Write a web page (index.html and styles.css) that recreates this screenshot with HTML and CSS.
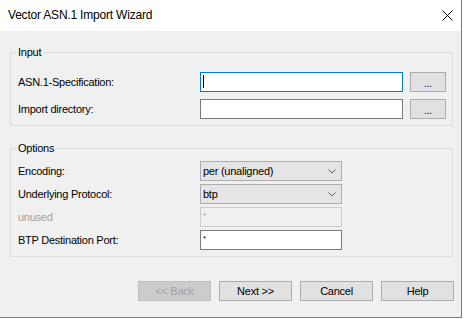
FILE: index.html
```html
<!DOCTYPE html>
<html lang="en">
<head>
    <meta charset="UTF-8" />
    <title>Vector ASN.1 Import Wizard</title>
    <link rel="stylesheet" href="styles.css">
</head>
<body>
    <div class="window">
        <div class="titlebar">
            <span class="title">Vector ASN.1 Import Wizard</span>
            <svg class="close" width="11" height="11" viewBox="0 0 11 11">
                <path d="M0.5 0.5 L10.5 10.5 M10.5 0.5 L0.5 10.5" stroke="#000" stroke-width="1" fill="none" />
            </svg>
        </div>

        <div class="content">
            <!-- Input group -->
            <fieldset class="group group-input">
                <legend>Input</legend>
                <div class="rows">
                    <div class="row">
                        <span class="label">ASN.1-Specification:</span>
                        <div class="textbox wide focused"><span class="caret"></span></div>
                        <div class="btn small">...</div>
                    </div>
                    <div class="row">
                        <span class="label">Import directory:</span>
                        <div class="textbox wide"></div>
                        <div class="btn small">...</div>
                    </div>
                </div>
            </fieldset>

            <!-- Options group -->
            <fieldset class="group group-options">
                <legend>Options</legend>
                <div class="rows">
                    <div class="row">
                        <span class="label">Encoding:</span>
                        <div class="combo">
                            <span>per (unaligned)</span>
                            <svg width="8" height="5" viewBox="0 0 8 5"><path d="M0.5 0.5 L4 4 L7.5 0.5" stroke="#606060" fill="none" /></svg>
                        </div>
                    </div>
                    <div class="row row-gap2">
                        <span class="label">Underlying Protocol:</span>
                        <div class="combo">
                            <span>btp</span>
                            <svg width="8" height="5" viewBox="0 0 8 5"><path d="M0.5 0.5 L4 4 L7.5 0.5" stroke="#606060" fill="none" /></svg>
                        </div>
                    </div>
                    <div class="row row-gap3">
                        <span class="label disabled">unused</span>
                        <div class="textbox narrow disabled"><span class="star">*</span></div>
                    </div>
                    <div class="row row-gap4">
                        <span class="label">BTP Destination Port:</span>
                        <div class="textbox narrow"><span class="star">*</span></div>
                    </div>
                </div>
            </fieldset>

            <div class="actions">
                <div class="btn disabled">&lt;&lt; Back</div>
                <div class="btn">Next &gt;&gt;</div>
                <div class="btn">Cancel</div>
                <div class="btn">Help</div>
            </div>
        </div>
    </div>
</body>
</html>
```
FILE: styles.css
```css
body {
    margin: 0;
    background-color: #fff;
    font-family: 'Liberation Sans', Arial, sans-serif;
    font-size: 11px;
    letter-spacing: -0.25px;
    color: #000;
}

.window {
    width: 461px;
    height: 317px;
    border-right: 1px solid #7a7a7a;
    border-bottom: 1px solid #7a7a7a;
    background-color: #f0f0f0;
    display: flex;
    flex-direction: column;
}

.titlebar {
    height: 31px;
    background-color: #fff;
    display: flex;
    align-items: center;
    justify-content: space-between;
    padding: 0 8px 0 8px;
}

.title {
    font-size: 12px;
    letter-spacing: -0.2px;
    margin-top: -1px;
}

.content {
    padding: 14px 0 0 10px;
}

.group {
    width: 443px;
    box-sizing: border-box;
    margin: 0;
    padding: 0 0 0 7px;
    border: 1px solid #dcdcdc;
    min-width: 0;
}

.group legend {
    padding: 0 2px;
    margin-left: -2px;
    line-height: 14px;
}

.group-input .rows {
    padding: 13px 0 6px 0;
}

.group-options {
    margin-top: 15px;
}

.group-options .rows {
    padding: 6px 0 6px 0;
}

.row {
    display: flex;
    align-items: center;
    height: 20px;
}

.row + .row {
    margin-top: 7px;
}

.group-options .row + .row {
    margin-top: 3px;
}

.group-options .row-gap3 {
    margin-top: 5px;
}

.group-options .row-gap4 {
    margin-top: 4px;
}

.label {
    width: 182px;
    flex-shrink: 0;
}

.label.disabled {
    color: #a0a0a0;
}

.textbox {
    height: 20px;
    box-sizing: border-box;
    border: 1px solid #7a7a7a;
    background-color: #fff;
    padding-left: 2px;
    display: flex;
    align-items: flex-start;
    line-height: 12px;
}

.textbox.wide {
    width: 203px;
}

.textbox.narrow {
    width: 142px;
}

.textbox.focused {
    border-color: #0078d7;
}

.textbox.disabled {
    background-color: #f0f0f0;
    border-color: #cccccc;
    color: #a0a0a0;
}

.star {
    font-size: 8px;
    margin-top: 2px;
}

.caret {
    width: 1px;
    height: 13px;
    margin-top: 2px;
    background-color: #000;
}

.combo {
    width: 142px;
    height: 20px;
    box-sizing: border-box;
    border: 1px solid #adadad;
    background-color: #e5e5e5;
    display: flex;
    align-items: center;
    justify-content: space-between;
    padding: 0 5px 0 2px;
}

.btn {
    box-sizing: border-box;
    width: 73px;
    height: 20px;
    border: 1px solid #adadad;
    background-color: #e1e1e1;
    display: flex;
    align-items: center;
    justify-content: center;
}

.btn.small {
    width: 36px;
    margin-left: 7px;
    font-size: 10px;
    padding-top: 2px;
}

.btn.disabled {
    background-color: #cccccc;
    border-color: #bfbfbf;
    color: #a0a0a0;
}

.actions {
    display: flex;
    gap: 8px;
    margin-top: 24px;
    padding-left: 128px;
}
```
